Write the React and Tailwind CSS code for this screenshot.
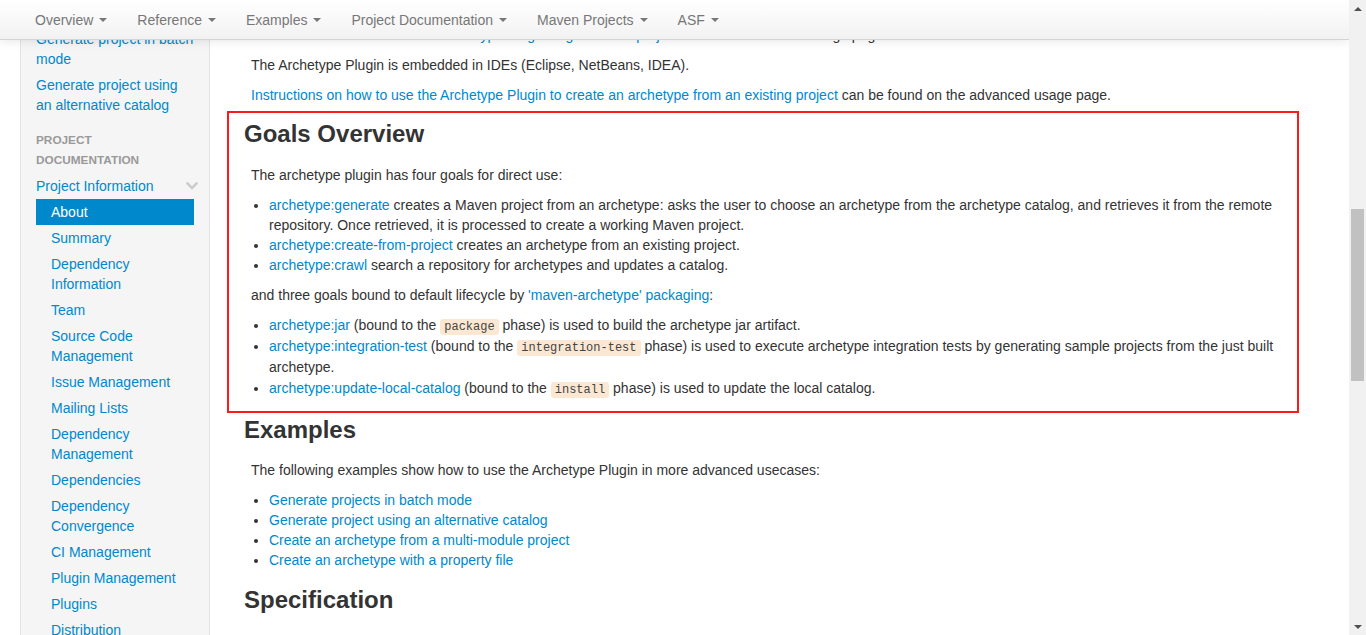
import { Fragment } from "react";

const navItems = [
  "Overview",
  "Reference",
  "Examples",
  "Project Documentation",
  "Maven Projects",
  "ASF",
];

const projectInfo = [
  "About",
  "Summary",
  "Dependency Information",
  "Team",
  "Source Code Management",
  "Issue Management",
  "Mailing Lists",
  "Dependency Management",
  "Dependencies",
  "Dependency Convergence",
  "CI Management",
  "Plugin Management",
  "Plugins",
  "Distribution",
];

function Caret() {
  return (
    <span className="ml-[6px] inline-block h-0 w-0 border-x-4 border-t-4 border-x-transparent border-t-[#777]" />
  );
}

function Navbar() {
  return (
    <div className="absolute inset-x-0 top-0 z-10 h-10 border-b border-[#d4d4d4] bg-gradient-to-b from-white to-[#f2f2f2] shadow-[0_1px_10px_rgba(0,0,0,0.1)]">
      <ul className="flex h-full pl-5">
        {navItems.map((item) => (
          <li key={item}>
            <a className="flex h-10 items-center px-[15px] text-[#777]">
              {item}
              <Caret />
            </a>
          </li>
        ))}
      </ul>
    </div>
  );
}

function Chevron() {
  return (
    <svg width="12" height="8" viewBox="0 0 12 8" className="-mr-[4px]">
      <path
        d="M1.5 1.5 L6 6 L10.5 1.5"
        fill="none"
        stroke="#cccccc"
        strokeWidth="2.6"
        strokeLinecap="square"
      />
    </svg>
  );
}

function Sidebar() {
  return (
    <aside className="w-[190px] shrink-0 border-x border-[#e3e3e3] bg-[#f5f5f5] px-[15px] pt-[26px]">
      <ul>
        <li>
          <a className="block py-[3px] text-[#0088cc]">Generate project in batch mode</a>
        </li>
        <li>
          <a className="block py-[3px] text-[#0088cc]">
            Generate project using an alternative catalog
          </a>
        </li>
        <li className="mt-[9px] py-[3px] text-[11.8px] font-bold uppercase leading-5 text-[#999]">
          Project Documentation
        </li>
        <li>
          <a className="flex items-center justify-between py-[3px] text-[#0088cc]">
            <span>Project Information</span>
            <Chevron />
          </a>
          <ul>
            {projectInfo.map((item) =>
              item === "About" ? (
                <li key={item}>
                  <a className="block bg-[#0088cc] py-[3px] pl-[15px] text-white">{item}</a>
                </li>
              ) : (
                <li key={item}>
                  <a className="block py-[3px] pl-[15px] text-[#0088cc]">{item}</a>
                </li>
              )
            )}
          </ul>
        </li>
      </ul>
    </aside>
  );
}

function Code({ children }) {
  return (
    <code className="rounded-[3px] bg-[#fce8d2] px-[4px] py-[1px] font-['Liberation_Mono','Courier_New',monospace] text-[12px] leading-[14px] text-[#444]">
      {children}
    </code>
  );
}

function A({ children }) {
  return <a className="text-[#0088cc]">{children}</a>;
}

function Content() {
  return (
    <main className="min-w-0 flex-1 pl-[17px] pr-[50px] pt-[25px]">
      <div className="px-[17px]">
        <p className="mb-[10px] ml-[7px]">
          <A>Instructions on how to use the Archetype Plugin to generate a project</A> can be
          found on the usage page.
        </p>
        <p className="mb-[10px] ml-[7px]">
          The Archetype Plugin is embedded in IDEs (Eclipse, NetBeans, IDEA).
        </p>
        <p className="mb-[6px] ml-[7px]">
          <A>
            Instructions on how to use the Archetype Plugin to create an archetype from an
            existing project
          </A>{" "}
          can be found on the advanced usage page.
        </p>
      </div>

      <section className="border-2 border-[#ff1a1a] px-[15px] pb-[2px]">
        <h2 className="mb-[11px] mt-[1px] text-[24px] font-bold leading-10 text-[#333]">
          Goals Overview
        </h2>
        <p className="mb-[10px] ml-[7px]">The archetype plugin has four goals for direct use:</p>
        <ul className="mb-[10px] list-disc pl-[25px]">
          <li>
            <A>archetype:generate</A> creates a Maven project from an archetype: asks the user
            to choose an archetype from the archetype catalog, and retrieves it from the remote
            repository. Once retrieved, it is processed to create a working Maven project.
          </li>
          <li>
            <A>archetype:create-from-project</A> creates an archetype from an existing project.
          </li>
          <li>
            <A>archetype:crawl</A> search a repository for archetypes and updates a catalog.
          </li>
        </ul>
        <p className="mb-[10px] ml-[7px]">
          and three goals bound to default lifecycle by <A>'maven-archetype' packaging</A>:
        </p>
        <ul className="mb-[10px] list-disc pl-[25px] leading-[21px]">
          <li>
            <A>archetype:jar</A> (bound to the <Code>package</Code> phase) is used to build the
            archetype jar artifact.
          </li>
          <li>
            <A>archetype:integration-test</A> (bound to the <Code>integration-test</Code> phase)
            is used to execute archetype integration tests by generating sample projects from
            the just built archetype.
          </li>
          <li>
            <A>archetype:update-local-catalog</A> (bound to the <Code>install</Code> phase) is
            used to update the local catalog.
          </li>
        </ul>
      </section>

      <div className="px-[17px]">
        <h2 className="-mt-[3px] mb-[10px] text-[24px] font-bold leading-10 text-[#333]">
          Examples
        </h2>
        <p className="mb-[10px] ml-[7px]">
          The following examples show how to use the Archetype Plugin in more advanced usecases:
        </p>
        <ul className="mb-[10px] list-disc pl-[25px]">
          {[
            "Generate projects in batch mode",
            "Generate project using an alternative catalog",
            "Create an archetype from a multi-module project",
            "Create an archetype with a property file",
          ].map((t) => (
            <Fragment key={t}>
              <li>
                <A>{t}</A>
              </li>
            </Fragment>
          ))}
        </ul>
        <h2 className="mb-[10px] text-[24px] font-bold leading-10 text-[#333]">Specification</h2>
      </div>
    </main>
  );
}

function Scrollbar() {
  return (
    <div className="flex w-[17px] shrink-0 flex-col bg-[#f1f1f1]">
      <div className="flex h-[17px] items-center justify-center">
        <span className="h-0 w-0 border-x-4 border-b-4 border-x-transparent border-b-[#505050]" />
      </div>
      <div className="flex-1">
        <div className="mx-[2px] mt-[192px] h-[172px] bg-[#c1c1c1]" />
      </div>
      <div className="flex h-[17px] items-center justify-center">
        <span className="h-0 w-0 border-x-4 border-t-4 border-x-transparent border-t-[#505050]" />
      </div>
    </div>
  );
}

export default function App() {
  return (
    <div className="flex h-[635px] w-[1366px] overflow-hidden bg-white font-['Liberation_Sans',Arial,sans-serif] text-[14px] leading-5 text-[#333]">
      <div className="relative flex flex-1 overflow-hidden pl-5">
        <Navbar />
        <Sidebar />
        <Content />
      </div>
      <Scrollbar />
    </div>
  );
}
